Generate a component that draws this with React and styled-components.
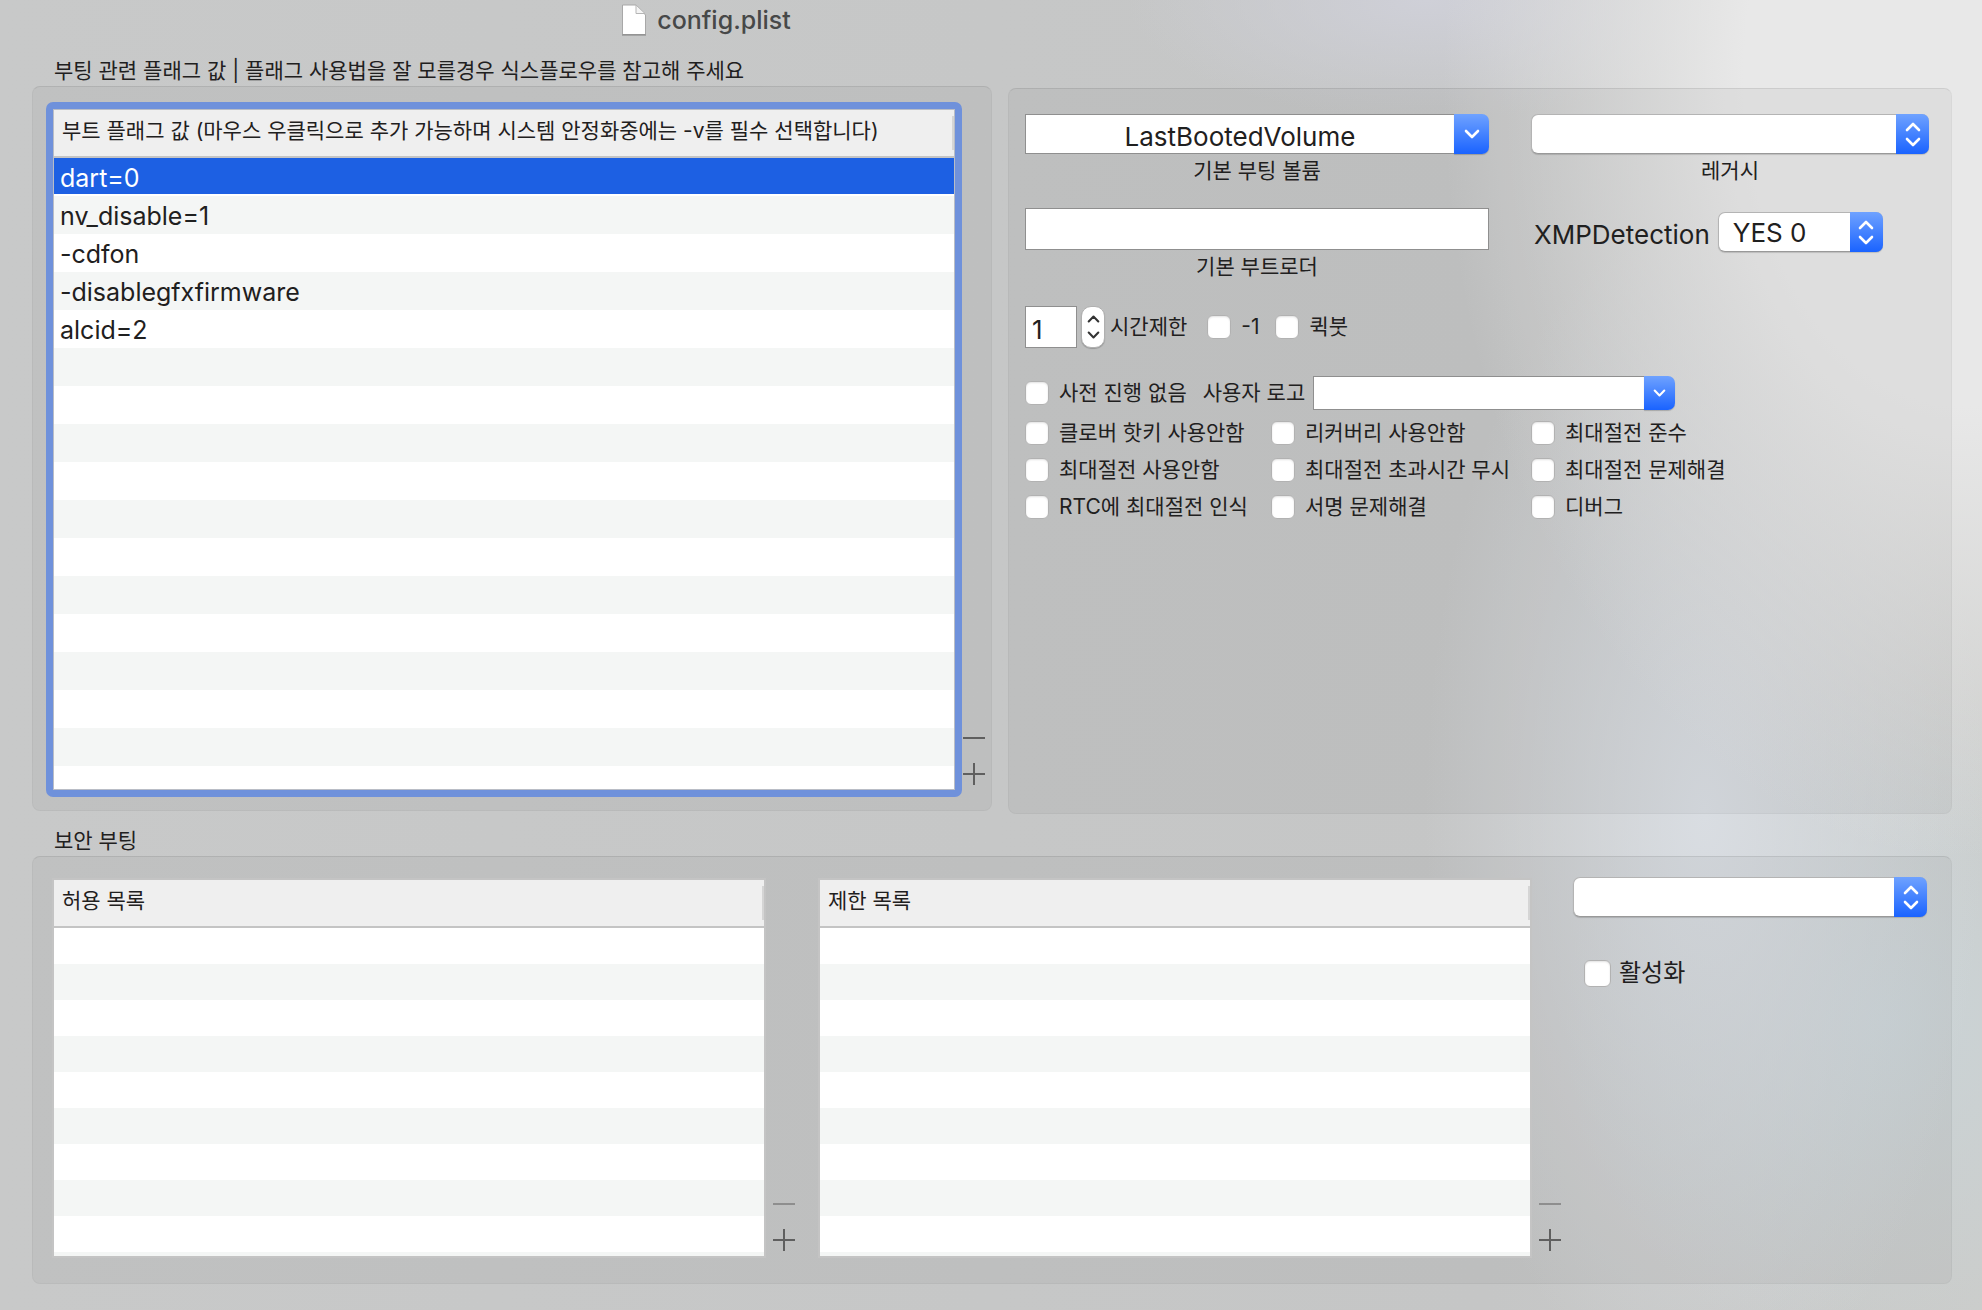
import React, { useState } from "react";
import styled, { createGlobalStyle, css } from "styled-components";

const GlobalStyle = createGlobalStyle`
    * {
        box-sizing: border-box;
    }

    body {
        margin: 0;
        background: #c6c7c7;
        color: #1f2020;
        font-family: Inter, "Noto Sans CJK KR", sans-serif;
        font-size: 26px;
    }

    input, select, button {
        font: inherit;
        color: inherit;
        margin: 0;
    }
`

const bootFlags = ['dart=0', 'nv_disable=1', '-cdfon', '-disablegfxfirmware', 'alcid=2'];

const bootOptions = [
    '클로버 핫키 사용안함', '리커버리 사용안함', '최대절전 준수',
    '최대절전 사용안함', '최대절전 초과시간 무시', '최대절전 문제해결',
    'RTC에 최대절전 인식', '서명 문제해결', '디버그',
];

const App = () => {
    const [selected, set_selected] = useState(0);
    const [volume, set_volume] = useState('LastBootedVolume');
    const [timeout, set_timeout] = useState('1');

    return (
        <Window>
            <GlobalStyle />
            <TitleBar>
                <FileIcon />
                <Title>config.plist</Title>
            </TitleBar>
            <Top>
                <Section>
                    <SectionTitle>부팅 관련 플래그 값 | 플래그 사용법을 잘 모를경우 식스플로우를 참고해 주세요</SectionTitle>
                    <FlagPanel>
                        <FocusRing>
                            <Table>
                                <thead>
                                    <tr><Th>부트 플래그 값 (마우스 우클릭으로 추가 가능하며 시스템 안정화중에는 -v를 필수 선택합니다)</Th></tr>
                                </thead>
                                <tbody>
                                    {bootFlags.map((flag, i) => (
                                        <FlagRow key={flag} $on={i === selected} onClick={() => set_selected(i)}>
                                            <td>{flag}</td>
                                        </FlagRow>
                                    ))}
                                </tbody>
                            </Table>
                            <Stripes $size="38px" $swap />
                        </FocusRing>
                        <AddRemove />
                    </FlagPanel>
                </Section>
                <BootPanel>
                    <Fields>
                        <Field>
                            <ComboBox>
                                <ComboInput id="volume" value={volume} onChange={(e) => set_volume(e.target.value)} />
                                <ComboButton aria-label="기본 부팅 볼륨"><Chevron /></ComboButton>
                            </ComboBox>
                            <Caption htmlFor="volume">기본 부팅 볼륨</Caption>
                        </Field>
                        <Field $top="24px">
                            <TextInput id="loader" />
                            <Caption htmlFor="loader">기본 부트로더</Caption>
                        </Field>
                    </Fields>
                    <Fields>
                        <Field>
                            <PopUp id="legacy" options={['']} />
                            <Caption htmlFor="legacy">레거시</Caption>
                        </Field>
                        <XmpRow>
                            <XmpLabel htmlFor="xmp">XMPDetection</XmpLabel>
                            <PopUp id="xmp" options={['YES 0']} width="165px" />
                        </XmpRow>
                    </Fields>
                    <Options>
                        <TimeRow>
                            <TimeInput id="timeout" value={timeout} onChange={(e) => set_timeout(e.target.value)} />
                            <Stepper>
                                <StepButton aria-label="+" onClick={() => set_timeout(String(Number(timeout) + 1))}>
                                    <Chevron up small />
                                </StepButton>
                                <StepButton aria-label="-" onClick={() => set_timeout(String(Number(timeout) - 1))}>
                                    <Chevron small />
                                </StepButton>
                            </Stepper>
                            <TimeLabel htmlFor="timeout">시간제한</TimeLabel>
                            <Check><Box type="checkbox" />-1</Check>
                            <Check><Box type="checkbox" />퀵붓</Check>
                        </TimeRow>
                        <LogoRow>
                            <Check><Box type="checkbox" />사전 진행 없음</Check>
                            <LogoLabel htmlFor="logo">사용자 로고</LogoLabel>
                            <ComboBox $width="362px" $height="34px">
                                <ComboInput id="logo" />
                                <ComboButton $width="31px" aria-label="사용자 로고"><Chevron small /></ComboButton>
                            </ComboBox>
                        </LogoRow>
                        <OptionGrid>
                            {bootOptions.map((text) => (
                                <Check key={text}><Box type="checkbox" />{text}</Check>
                            ))}
                        </OptionGrid>
                    </Options>
                </BootPanel>
            </Top>
            <SectionTitle>보안 부팅</SectionTitle>
            <SecurePanel>
                <ListView title="허용 목록" space="23px" />
                <ListView title="제한 목록" space="12px" />
                <SecureSide>
                    <PopUp aria-label="보안 부팅" options={['']} />
                    <Check $large><Box type="checkbox" $size="27px" />활성화</Check>
                </SecureSide>
            </SecurePanel>
        </Window>
    );
}

export default App;

const ListView = ({ title, space }) => {
    return (
        <ListWrap $space={space}>
            <ListFrame>
                <Table>
                    <thead>
                        <tr><Th>{title}</Th></tr>
                    </thead>
                </Table>
                <Stripes $size="36px" />
            </ListFrame>
            <AddRemove dim />
        </ListWrap>
    )
}

const AddRemove = ({ dim }) => {
    return (
        <Buttons $dim={dim}>
            <IconButton aria-label="-" disabled={dim}>
                <svg width="22" height="22"><path d="M0 11H22" stroke="currentColor" strokeWidth="2" /></svg>
            </IconButton>
            <IconButton aria-label="+">
                <svg width="22" height="22"><path d="M0 11H22M11 0V22" stroke="currentColor" strokeWidth="2" /></svg>
            </IconButton>
        </Buttons>
    )
}

const PopUp = ({ options, width, ...rest }) => {
    return (
        <PopUpWrap $width={width}>
            <Select {...rest}>
                {options.map((text) => <option key={text}>{text}</option>)}
            </Select>
            <PopUpArrow>
                <Chevron up />
                <Chevron />
            </PopUpArrow>
        </PopUpWrap>
    )
}

const Chevron = ({ up, small }) => {
    return (
        <svg width={small ? 13 : 16} height={small ? 8 : 10} viewBox="0 0 16 10" fill="none" stroke="currentColor"
            strokeWidth="2.6" strokeLinecap="round" strokeLinejoin="round">
            <path d={up ? 'M2 8L8 2L14 8' : 'M2 2L8 8L14 2'} />
        </svg>
    )
}

const FileIcon = () => {
    return (
        <svg width="26" height="32" viewBox="0 0 26 32">
            <path d="M1.5 1H15L24.500 11V30.500H1.500Z" fill="#fff" stroke="#a8a8a8" />
            <path d="M15 1V9.500H24L15 1Z" fill="#f4f4f4" stroke="#b5b5b5" />
            <path d="M1 31H25" stroke="#808080" />
        </svg>
    )
}

const Window = styled.main`
    min-height: 100vh;
    padding: 0 30px 26px 32px;
    background:
        radial-gradient(ellipse 520px 780px at 99% 6%, #e8e8e8 42%, rgba(232, 232, 232, 0) 100%),
        radial-gradient(ellipse 280px 600px at 86% 62%, #d9dde2 0%, rgba(217, 221, 226, 0) 100%),
        radial-gradient(ellipse 320px 340px at 95% 78%, #cbd4d7 0%, rgba(203, 212, 215, 0) 100%),
        radial-gradient(ellipse 300px 120px at 72% 0%, #cfd0d8 0%, rgba(207, 208, 216, 0) 100%),
        linear-gradient(90deg, #c8c9c9 0%, #c5c6c6 75%, #cbccca 100%);
`

const TitleBar = styled.header`
    display: flex;
    align-items: center;
    justify-content: center;
    gap: 10px;
    height: 40px;
    padding-right: 572px;
`

const Title = styled.h1`
    margin: 0;
    font-size: 25px;
    font-weight: 500;
    color: #474848;
`

const Top = styled.div`
    display: grid;
    grid-template-columns: 960fr 944fr;
    column-gap: 16px;
    margin-bottom: 11px;
`

const Section = styled.section`
    margin-top: 15px;
    margin-bottom: 3px;
    display: flex;
    flex-direction: column;
`

const SectionTitle = styled.h2`
    height: 31px;
    margin: 0;
    padding: 1px 0 0 22px;
    font-size: 21px;
    font-weight: 400;
    line-height: 30px;
    white-space: nowrap;
`

const panel = css`
    border: 1px solid rgba(0, 0, 0, 0.03);
    border-top-color: rgba(0, 0, 0, 0.08);
    border-radius: 8px;
    background: rgba(0, 0, 0, 0.04);
`

const FlagPanel = styled.div`
    ${panel}
    display: flex;
    flex: 1;
    padding: 15px 6px 13px 13px;
`

const FocusRing = styled.div`
    display: flex;
    flex: 1;
    flex-direction: column;
    min-width: 0;
    border: 7px solid #6f91db;
    border-radius: 7px;
    outline: 1px solid #b9bdc6;
    outline-offset: -8px;
    padding: 1px;
`

const Table = styled.table`
    width: 100%;
    border-collapse: separate;
    border-spacing: 0;
`

const Th = styled.th`
    height: 48px;
    padding: 0 0 4px 8px;
    border-bottom: 2px solid #c4c4c4;
    background: linear-gradient(#d5d5d5, #d5d5d5) right 6px / 2px 34px no-repeat #efefef;
    font-size: 21px;
    font-weight: 400;
    line-height: 30px;
    text-align: left;
    white-space: nowrap;
`

const FlagRow = styled.tr`
    height: 38px;
    background: #fff;

    &:nth-child(even) {
        background: #f4f6f5;
    }

    td {
        padding: 4px 0 0 6px;
        font-size: 25px;
        line-height: 32px;
        border-bottom: 2px solid transparent;
        ${(props) => props.$on && 'background: #1d60e3; background-clip: padding-box; color: #fff;'}
    }
`

const Stripes = styled.div`
    flex: 1;
    background: repeating-linear-gradient(
        ${(props) => props.$swap ? '#f4f6f5' : '#fff'} 0 ${(props) => props.$size},
        ${(props) => props.$swap ? '#fff' : '#f4f6f5'} ${(props) => props.$size} calc(2 * ${(props) => props.$size})
    );
`

const Buttons = styled.div`
    display: flex;
    flex-direction: column;
    justify-content: flex-end;
    gap: 14px;
    padding-bottom: ${(props) => props.$dim ? '7px' : '12px'};
    margin-left: ${(props) => props.$dim ? '7px' : '1px'};
`

const IconButton = styled.button`
    display: flex;
    padding: 0;
    border: 0;
    background: none;
    color: #5f5f5f;

    &:disabled {
        color: #8e8e8e;
    }
`

const BootPanel = styled.section`
    ${panel}
    display: grid;
    grid-template-columns: 464fr 398fr;
    grid-template-rows: auto 1fr;
    column-gap: 42px;
    height: 726px;
    margin-top: 48px;
    padding: 25px 22px 0 16px;
`

const Fields = styled.div`
    display: flex;
    flex-direction: column;
`

const Field = styled.div`
    display: flex;
    flex-direction: column;
    margin-top: ${(props) => props.$top || '0'};
`

const Caption = styled.label`
    height: 30px;
    padding-top: 4px;
    font-size: 21px;
    line-height: 26px;
    text-align: center;
`

const blue = css`
    display: flex;
    align-items: center;
    justify-content: center;
    border: 0;
    border-radius: 0 7px 7px 0;
    background: linear-gradient(#6fa2ff, #1a63ff);
    color: #fff;
`

const ComboBox = styled.div`
    display: flex;
    width: ${(props) => props.$width || '100%'};
    height: ${(props) => props.$height || '40px'};
`

const ComboInput = styled.input`
    flex: 1;
    min-width: 0;
    padding: 4px 0 0;
    border: 1px solid #8f8f8f;
    border-right: 0;
    background: #fff;
    text-align: center;
    outline: 0;
`

const ComboButton = styled.button`
    ${blue}
    width: ${(props) => props.$width || '35px'};
    padding: 0;
    box-shadow: 0 1px 1px rgba(0, 0, 0, 0.2);

    && {
        color: #fff;
    }
`

const TextInput = styled.input`
    width: 100%;
    height: 42px;
    padding: 4px 6px 0;
    border: 1px solid #8f8f8f;
    background: #fff;
    outline: 0;
`

const PopUpWrap = styled.div`
    position: relative;
    width: ${(props) => props.$width || '100%'};
    height: 40px;
`

const Select = styled.select`
    appearance: none;
    width: 100%;
    height: 100%;
    padding: 0 40px 0 14px;
    border: 1px solid #b4b4b4;
    border-bottom-color: #999;
    border-radius: 7px;
    background: #fff;
    box-shadow: 0 1px 1px rgba(0, 0, 0, 0.15);
    outline: 0;
`

const PopUpArrow = styled.span`
    ${blue}
    position: absolute;
    top: 0;
    right: 0;
    flex-direction: column;
    gap: 5px;
    width: 33px;
    height: 100%;
    pointer-events: none;
`

const XmpRow = styled.div`
    display: flex;
    align-items: center;
    gap: 8px;
    margin-top: 28px;
    padding-left: 3px;
`

const XmpLabel = styled.label`
    padding-top: 4px;
`

const Options = styled.div`
    grid-column: 1 / -1;
    margin-top: 26px;
`

const TimeRow = styled.div`
    display: flex;
    align-items: center;
    height: 42px;
`

const TimeInput = styled(TextInput)`
    width: 52px;
`

const Stepper = styled.div`
    display: flex;
    flex-direction: column;
    width: 24px;
    height: 42px;
    margin-left: 4px;
    padding: 4px 0;
    border: 1px solid #b0b0b0;
    border-radius: 10px;
    background: #fff;
    box-shadow: 0 1px 1px rgba(0, 0, 0, 0.2);
`

const StepButton = styled.button`
    display: flex;
    flex: 1;
    align-items: center;
    justify-content: center;
    padding: 0;
    border: 0;
    background: none;
    color: #333;
`

const TimeLabel = styled.label`
    margin: 0 20px 0 5px;
    font-size: 21px;
    line-height: 30px;
`

const Check = styled.label`
    display: flex;
    align-items: center;
    gap: ${(props) => props.$large ? '8px' : '10px'};
    height: 30px;
    margin-right: 16px;
    font-size: ${(props) => props.$large ? '24px' : '21px'};
    line-height: 30px;
    white-space: nowrap;
`

const Box = styled.input`
    appearance: none;
    flex: none;
    width: ${(props) => props.$size || '24px'};
    height: ${(props) => props.$size || '24px'};
    border: 1px solid #b2b2b2;
    border-radius: 6px;
    background: #fff;
    box-shadow: inset 0 1px 2px rgba(0, 0, 0, 0.12);

    &:checked {
        background: #1d60e3;
    }
`

const LogoRow = styled.div`
    display: flex;
    align-items: center;
    margin-top: 28px;
`

const LogoLabel = styled.label`
    margin-right: 8px;
    font-size: 21px;
    line-height: 30px;
`

const OptionGrid = styled.div`
    display: grid;
    grid-template-columns: 246px 260px auto;
    justify-content: start;
    align-items: center;
    grid-auto-rows: 37px;
    margin-top: 4px;
`

const SecurePanel = styled.section`
    ${panel}
    display: grid;
    grid-template-columns: 766fr 755fr 354fr;
    height: 428px;
    padding: 20px 24px 25px 19px;
`

const ListWrap = styled.div`
    display: flex;
    padding-right: ${(props) => props.$space};
`

const ListFrame = styled.div`
    display: flex;
    flex: 1;
    flex-direction: column;
    margin-top: 1px;
    border: 2px solid #c4c4c4;
`

const SecureSide = styled.div`
    display: flex;
    flex-direction: column;
    gap: 41px;

    ${Check} {
        margin-left: 11px;
    }
`
